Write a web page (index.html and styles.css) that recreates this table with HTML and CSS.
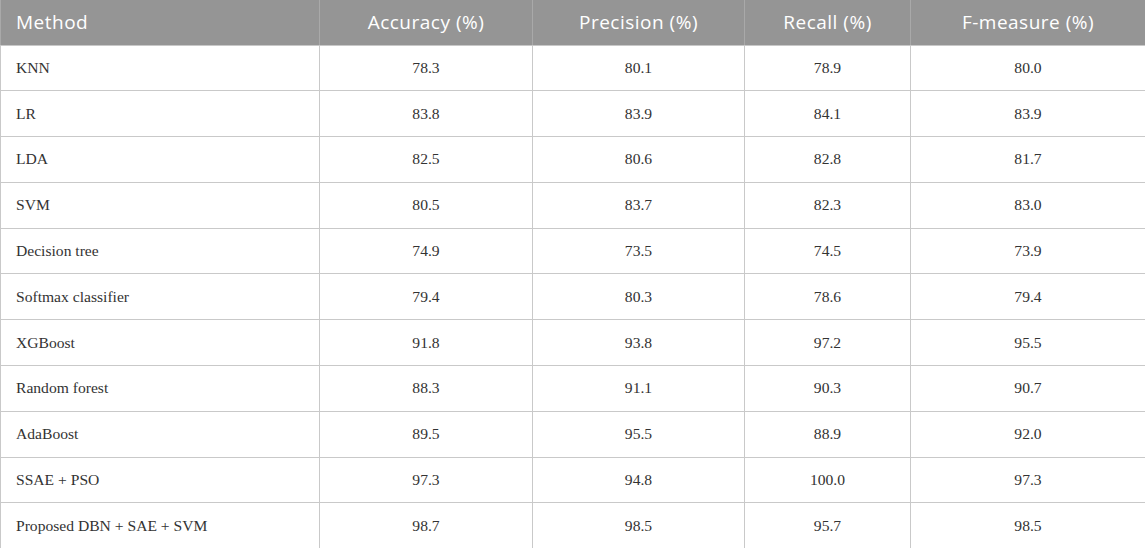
FILE: index.html
```html
<!DOCTYPE html>
<html>
<head>
<meta charset="utf-8">
<link rel="stylesheet" href="styles.css">
</head>
<body>
<table class="tbl">
  <colgroup>
    <col class="c1"><col class="c2"><col class="c3"><col class="c4"><col class="c5">
  </colgroup>
  <thead>
    <tr><th class="left">Method</th><th>Accuracy (%)</th><th>Precision (%)</th><th>Recall (%)</th><th>F-measure (%)</th></tr>
  </thead>
  <tbody>
    <tr><td class="left">KNN</td><td>78.3</td><td>80.1</td><td>78.9</td><td>80.0</td></tr>
    <tr><td class="left">LR</td><td>83.8</td><td>83.9</td><td>84.1</td><td>83.9</td></tr>
    <tr><td class="left">LDA</td><td>82.5</td><td>80.6</td><td>82.8</td><td>81.7</td></tr>
    <tr><td class="left">SVM</td><td>80.5</td><td>83.7</td><td>82.3</td><td>83.0</td></tr>
    <tr><td class="left">Decision tree</td><td>74.9</td><td>73.5</td><td>74.5</td><td>73.9</td></tr>
    <tr><td class="left">Softmax classifier</td><td>79.4</td><td>80.3</td><td>78.6</td><td>79.4</td></tr>
    <tr><td class="left">XGBoost</td><td>91.8</td><td>93.8</td><td>97.2</td><td>95.5</td></tr>
    <tr><td class="left">Random forest</td><td>88.3</td><td>91.1</td><td>90.3</td><td>90.7</td></tr>
    <tr><td class="left">AdaBoost</td><td>89.5</td><td>95.5</td><td>88.9</td><td>92.0</td></tr>
    <tr><td class="left">SSAE + PSO</td><td>97.3</td><td>94.8</td><td>100.0</td><td>97.3</td></tr>
    <tr><td class="left">Proposed DBN + SAE + SVM</td><td>98.7</td><td>98.5</td><td>95.7</td><td>98.5</td></tr>
  </tbody>
</table>
</body>
</html>
```
FILE: styles.css
```css
html, body {
  margin: 0;
  padding: 0;
  background: #ffffff;
}
.tbl {
  border-collapse: collapse;
  table-layout: fixed;
  width: 1145px;
}
.c1 { width: 319px; }
.c2 { width: 213px; }
.c3 { width: 212px; }
.c4 { width: 166px; }
.c5 { width: 235px; }
.tbl th {
  background: #959595;
  color: #ffffff;
  font-family: "Open Sans", "Noto Sans", sans-serif;
  font-weight: 400;
  font-size: 19px;
  letter-spacing: 0.5px;
  height: 45px;
  padding: 0 15px;
  text-align: center;
  border-left: 1px solid #a9a9a9;
  border-right: 1px solid #a9a9a9;
  border-bottom: 1px solid #c8c8c8;
  box-sizing: border-box;
}
.tbl td {
  font-family: "Liberation Serif", "Times New Roman", serif;
  font-size: 15.6px;
  color: #333333;
  height: 45.8px;
  padding: 0 15px;
  text-align: center;
  border: 1px solid #c9c9c9;
  box-sizing: border-box;
}
.tbl .left { text-align: left; }
```
